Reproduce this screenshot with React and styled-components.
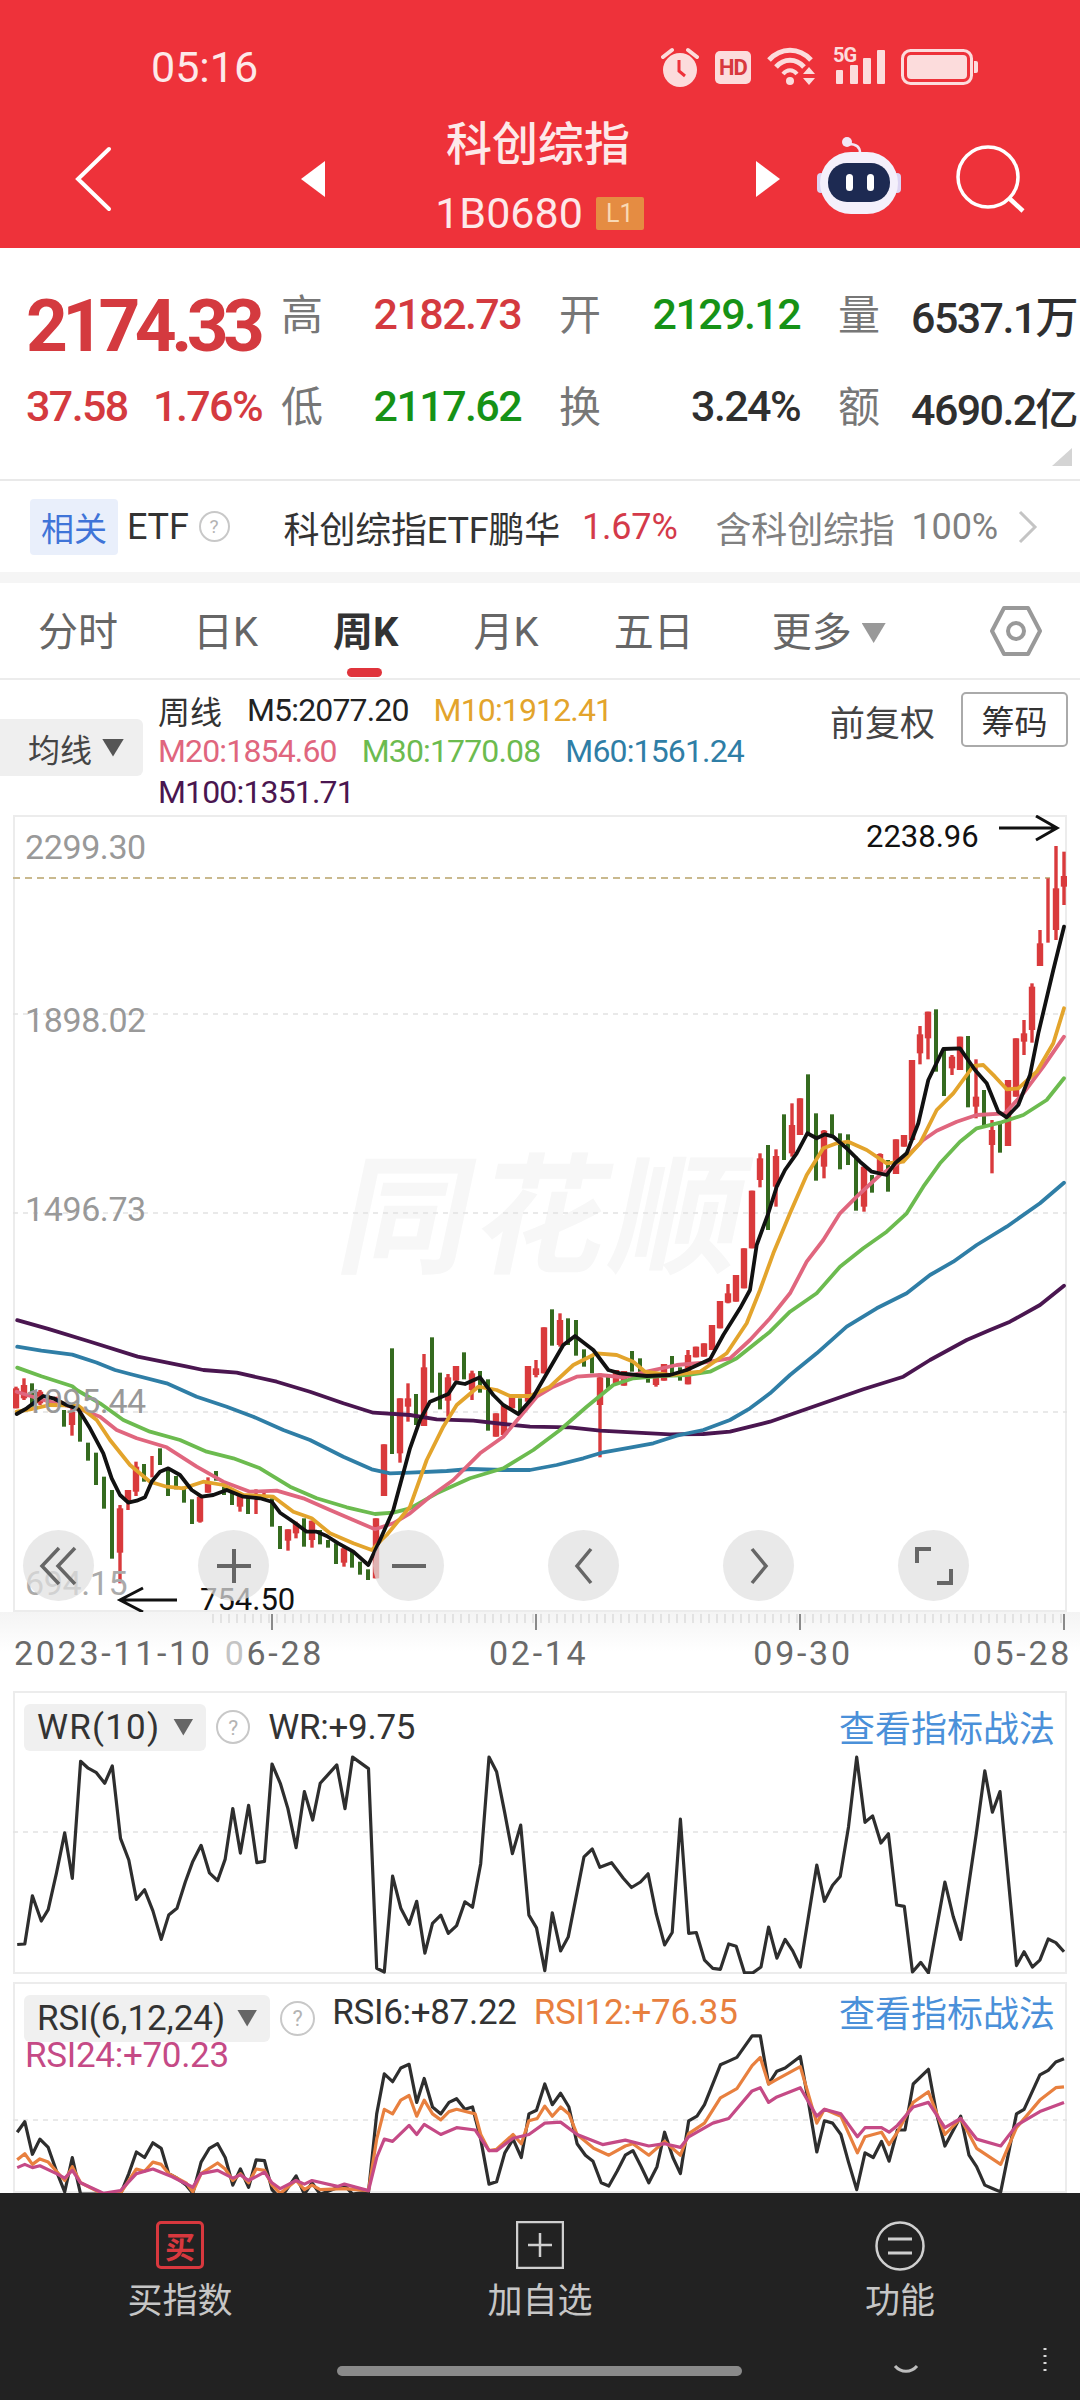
import React from 'react'
import styled, { createGlobalStyle } from 'styled-components'

const GlobalStyle = createGlobalStyle`
  html, body { margin: 0; padding: 0; background: #fff; }
  #root { width: 1080px; }
  * { box-sizing: border-box; }
`

// chart points were read off enlarged crops, each crop has its own scale
const crops = {
  z3: { x: 0, y: 1060, sx: 1.452, sy: 2.529 },
  z4: { x: 0, y: 1680, sx: 1.452, sy: 2.178 },
  z7: { x: 10, y: 1370, sx: 3, sy: 3 },
  z8: { x: 370, y: 1290, sx: 3, sy: 3 },
  z9: { x: 690, y: 1000, sx: 3, sy: 3 },
  z10: { x: 880, y: 830, sx: 3, sy: 3 },
}

const seg = (crop, str) => {
  const c = crops[crop]
  return str.trim().split(/\s+/).map((pair) => {
    const [a, b] = pair.split(',').map(Number)
    return `${(c.x + a / c.sx).toFixed(1)},${(c.y + b / c.sy).toFixed(1)}`
  }).join(' ')
}

const maLines = [
  { color: '#4a1650', points: [
    seg('z3', '25,658 70,680 130,712 200,750 270,775'),
    seg('z7', '580,0 680,8 800,35 900,65 1000,100 1090,128 1200,135'),
    seg('z8', '200,388 310,392 400,402 480,410 600,412 690,422 800,428 900,433 1000,432 1080,425 1200,395'),
    seg('z9', '520,1168 640,1130 720,1080 830,1020 900,990 960,965 1050,915 1122,857'),
  ] },
  { color: '#2f7ea6', points: [
    seg('z3', '25,725 60,735 105,745 140,765'),
    seg('z7', '315,0 360,12 470,40 560,80 650,110 730,140 820,180 900,210 1000,260 1085,298 1140,310 1200,308'),
    seg('z8', '230,543 300,537 400,540 480,540 560,525 640,505 700,487 780,473 850,460 920,437 1000,420 1080,390 1140,355 1200,310'),
    seg('z9', '300,1125 380,1060 470,980 560,925 650,880 720,825 790,785 860,735 950,680 1050,610 1122,548'),
  ] },
  { color: '#6cbb4f', points: [
    seg('z3', '25,778 60,800 105,825'),
    seg('z7', '200,60 270,100 340,150 420,185 510,210 590,245 670,265 750,295 840,350 920,385 1010,412 1095,432 1150,428 1200,415'),
    seg('z8', '200,610 300,565 400,535 490,480 570,420 650,350 730,285 790,265 870,258 950,255 1020,245 1100,205 1200,125'),
    seg('z9', '300,935 380,880 450,800 520,745 590,695 650,640 700,560 750,490 810,425 860,385 930,368 1000,345 1070,300 1122,235'),
  ] },
  { color: '#e0667e', points: [
    seg('z7', '20,65 100,90 205,115 270,140 320,180 380,205 470,232 560,290 640,335 720,365 800,362 880,385 960,420 1030,450 1095,478 1150,460 1200,430'),
    seg('z8', '180,620 250,570 330,490 400,440 450,380 500,320 550,290 620,260 690,255 760,262 830,245 920,225 1000,218 1080,205 1140,150 1200,85'),
    seg('z9', '300,880 350,785 400,720 450,640 500,590 570,525 640,480 700,420 740,392 800,365 860,345 945,340 1000,280 1060,200 1122,110'),
  ] },
  { color: '#e3a42c', points: [
    seg('z7', '20,125 60,118 120,105 205,107 260,150 300,210 360,285 420,335 470,350 520,355 580,335 640,345 700,375 790,380 850,425 905,445 960,490 1030,520 1085,540 1130,495 1200,410'),
    seg('z8', '170,510 220,410 260,345 325,290 380,300 420,318 480,318 540,290 610,225 680,190 740,195 790,215 825,245 900,255 990,245 1070,190 1130,100 1170,0'),
    seg('z9', '250,760 300,640 350,525 400,445 440,430 475,425 530,450 590,490 640,485 690,430 740,330 790,280 850,198 880,195 915,230 950,268 985,265 1040,215 1090,130 1122,25'),
  ] },
  { color: '#111', points: [
    seg('z7', '20,132 50,115 70,100 100,78 130,85 170,105 205,118 240,175 280,250 305,325 330,375 355,398 380,392 405,382 425,335 450,305 475,295 510,315 545,360 575,380 610,375 650,360 700,380 750,385 785,395 810,428 850,455 890,485 920,485 950,498 985,520 1030,545 1075,585 1110,510 1150,420 1185,290 1200,235'),
    seg('z8', '150,390 180,335 235,312 258,277 285,282 330,262 370,315 400,345 445,372 490,320 545,225 580,165 615,138 670,180 715,240 750,250 830,258 900,255 950,240 1020,208 1060,135 1110,55 1140,0'),
    seg('z9', '200,735 235,640 260,560 285,510 320,460 352,400 380,415 405,403 430,410 470,445 510,485 545,515 590,525 615,490 650,460 685,370 715,240 760,147 810,145 855,210 890,250 925,335 950,352 985,315 1020,225 1045,100'),
    seg('z10', '520,420 552,290'),
  ] },
]

// color, wick top, wick bottom, body top, body bottom (no body = solid bar)
const candles = [
  ...[
    ['r',18,50,115,55,115],['r',42,25,90,45,85],['g',66,40,110],['r',90,60,105,65,100],['r',114,75,110],['r',138,80,110],
    ['g',162,120,170],['r',186,110,197,125,165],['g',210,115,215],['g',234,218,272],['g',258,248,345],['g',282,320,416],
    ['g',306,360,566],['r',330,405,640,415,548],['r',354,360,420,360,395],['r',378,275,378,290,365],['g',402,282,335],
    ['r',426,258,322],['g',450,235,285],['g',474,295,378],['g',498,318,358],['g',522,350,398],['g',546,388,462],
    ['r',570,375,458,380,455],['r',594,322,368,335,368],['g',618,303,332],['g',642,350,375],['g',666,360,405],
    ['r',690,370,425,375,410],['g',714,380,432],['r',738,358,432],['r',762,362,385],['g',786,385,470],['g',810,468,537],
    ['r',834,478,542,478,512],['r',858,455,505,460,490],['g',882,445,530],['r',906,452,533,452,510],['g',930,480,523],
    ['g',954,510,533],['g',978,520,582],['r',1002,530,590,535,578],['g',1026,545,593],['g',1050,575,614],['g',1074,598,630],
    ['r',1098,445,625,445,625],['r',1122,223,378,223,378],
  ].map((c) => ['z7', ...c]),
  ...[
    ['g',66,175,492],['r',90,325,518,325,490],['r',114,280,395,325,350],['g',138,312,405],['r',162,192,408,232,408],
    ['g',186,142,308],['g',210,248,358],['r',234,252,380,262,332],['r',258,228,272,228,272],['g',282,187,268],
    ['r',306,242,330,250,300],['g',330,243,308],['g',354,268,422],['r',378,370,440,370,440],['r',402,345,435,345,435],
    ['r',426,318,355,318,355],['g',450,325,365],['r',474,228,335,228,335],['r',498,210,262,235,255],['r',522,112,250,112,250],
    ['g',546,58,167],['r',570,70,170,90,165],['g',594,85,165],['g',618,90,197],['g',642,178,230],['g',666,195,250],
    ['r',690,250,502,262,345],['g',714,255,295],['r',738,240,280,240,280],['r',762,243,287,243,287],['g',786,183,245],
    ['g',810,205,248],['g',834,240,278],['r',858,255,290,262,285],['r',882,222,272,222,272],['g',906,198,250],
    ['g',930,232,272],['r',954,180,283,195,283],
  ].map((c) => ['z8', ...c]),
  ...[
    ['r',18,1040,1072,1040,1072],['r',42,1030,1070,1030,1070],['r',66,975,1050,975,1050],['r',90,903,985,903,985],
    ['r',114,852,910,880,908],['r',138,825,905,825,905],['r',162,745,865,745,865],['r',186,572,745,572,745],
    ['r',210,460,562,475,540],['g',234,435,690],['r',258,448,620,468,560],['g',282,343,480],['r',306,310,470,375,460],
    ['r',330,295,405,295,405],['g',354,223,400],['g',378,340,542],['r',402,390,535,392,500],['g',426,343,410],['g',450,400,508],
    ['g',474,403,495],['g',498,470,632],['r',522,500,635,500,620],['g',546,525,578],['r',570,460,520,462,515],['g',594,480,575],
    ['r',618,418,522,418,522],['r',642,405,440,405,440],['r',666,180,420,180,420],['r',690,78,193,103,160],['r',714,35,178,35,115],
    ['g',738,28,215],['g',762,145,288],['r',786,165,225,170,205],['r',810,110,210,110,210],['g',834,108,322],
    ['r',858,178,355,290,320],['g',882,270,378],['r',906,360,520,390,435],['g',930,365,458],['r',954,240,438,240,438],
    ['r',978,115,290,115,290],
  ].map((c) => ['z9', ...c]),
  ...[
    ['r',432,570,675,610,635],['r',456,460,638,470,600],['r',480,300,408,340,408],['r',504,145,338],['r',528,48,330,175,300],
    ['r',552,65,225,138,170],
  ].map((c) => ['z10', ...c]),
]

const wrLine = seg('z4', '25,576 36,575 47,470 60,525 70,500 82,420 94,333 105,432 117,177 128,192 140,202 152,225 163,187 175,345 187,392 198,478 210,457 222,503 234,565 245,512 257,497 269,440 280,395 292,360 304,420 316,437 327,390 338,280 349,377 361,273 373,398 384,395 395,183 407,225 418,280 430,365 442,243 454,305 465,225 477,205 489,185 501,280 512,168 523,180 535,193 547,628 558,636 570,427 582,497 594,532 605,482 617,595 628,530 640,512 651,552 663,535 675,483 686,495 698,400 710,168 721,200 733,290 744,378 756,316 768,512 779,540 791,633 802,507 814,590 825,560 848,385 860,368 871,408 888,398 905,432 917,452 930,440 941,422 953,510 965,577 976,550 988,303 1000,552 1011,550 1023,610 1035,628 1046,630 1058,575 1069,580 1081,638 1093,638 1105,625 1116,538 1128,606 1140,565 1151,590 1162,625 1186,403 1197,482 1209,447 1220,428 1232,320 1244,168 1256,310 1267,296 1279,355 1290,335 1302,490 1313,493 1325,636 1337,615 1348,638 1372,440 1384,515 1395,565 1418,330 1430,198 1441,288 1452,243 1476,622 1487,592 1499,625 1510,610 1522,564 1533,572 1545,592')

const rsiLines = [
  { color: '#2e2e2e', points: seg('z4', '25,985 36,962 47,1033 58,1000 70,1018 82,1070 94,1115 105,1040 117,1120 175,1120 187,1075 198,1028 210,1040 222,1008 234,1020 245,1075 257,1085 270,1100 280,1118 292,1050 304,1020 316,1010 327,1040 338,1100 349,1065 361,1105 372,1045 384,1047 395,1110 407,1130 430,1080 442,1120 453,1095 465,1120 500,1100 512,1120 535,1115 547,945 558,858 570,875 582,845 594,837 605,920 616,868 628,930 640,945 652,920 663,912 675,935 686,930 698,1000 710,1098 721,1093 733,1030 745,1000 757,1040 768,945 779,937 791,880 802,925 814,900 826,930 838,1010 850,1035 861,1048 873,1095 884,1102 896,1070 908,1035 919,1025 931,1060 942,1095 954,1060 965,985 977,1040 988,1075 1000,960 1012,950 1023,925 1046,838 1058,830 1070,822 1092,775 1104,775 1116,880 1128,852 1140,845 1162,820 1174,920 1186,1028 1197,960 1209,965 1221,990 1232,1050 1244,1110 1256,1030 1268,1040 1280,1005 1291,1048 1303,980 1314,980 1326,880 1348,848 1360,945 1372,1015 1395,950 1407,1035 1418,1060 1430,1100 1442,1108 1453,1115 1476,945 1487,935 1510,860 1522,850 1533,832 1545,825') },
  { color: '#e8803f', points: seg('z4', '25,1045 36,1032 47,1055 58,1043 70,1050 82,1070 94,1090 105,1060 117,1095 150,1120 175,1118 198,1065 210,1070 222,1050 234,1055 245,1075 270,1095 280,1115 292,1075 316,1052 327,1065 338,1090 349,1075 361,1095 372,1065 384,1068 395,1100 407,1118 430,1090 442,1110 453,1100 465,1110 500,1108 535,1112 547,1000 558,935 570,945 582,915 594,905 605,950 616,915 628,945 640,958 652,940 663,935 690,945 698,990 710,1025 721,1022 745,990 757,1010 768,960 780,955 791,928 802,950 814,930 826,945 838,990 862,1020 884,1035 908,1015 919,1010 942,1035 965,1005 988,1035 1000,988 1023,965 1046,910 1070,890 1092,840 1104,822 1116,880 1128,870 1162,842 1186,965 1197,935 1221,950 1245,1030 1256,995 1280,985 1291,1012 1303,985 1326,920 1348,897 1372,990 1395,955 1418,1020 1453,1055 1476,975 1510,915 1533,888 1545,886') },
  { color: '#c54a86', points: seg('z4', '25,1062 36,1055 47,1062 58,1058 82,1075 94,1085 105,1068 117,1095 150,1118 175,1112 198,1075 222,1065 250,1082 280,1105 292,1075 316,1068 338,1085 349,1078 361,1090 384,1072 395,1095 407,1108 430,1090 442,1098 453,1090 490,1103 500,1098 535,1112 547,1040 558,1000 570,1005 594,970 605,990 616,968 640,990 663,975 690,980 710,1025 721,1025 745,998 768,990 791,965 814,963 838,990 875,1012 908,1002 942,1015 965,1010 988,1018 1000,995 1035,965 1058,955 1092,895 1104,888 1116,920 1128,908 1162,888 1186,950 1197,935 1221,945 1245,995 1256,975 1280,975 1291,985 1303,970 1326,930 1348,920 1372,975 1395,955 1418,1000 1453,1015 1476,970 1510,940 1545,920') },
]

const candleRects = candles.map(([crop, kind, zx, top, bot, bTop, bBot], i) => {
  const c = crops[crop]
  const x = c.x + zx / c.sx
  const y = (v) => c.y + v / c.sy
  const fill = kind === 'r' ? '#d93a3c' : '#356b1f'
  const wick = kind === 'r' ? 3.4 : 4
  return (
    <g key={i} fill={fill}>
      <rect x={x - wick / 2} y={y(top)} width={wick} height={(bot - top) / c.sy} />
      {bTop !== undefined && <rect x={x - 3.2} y={y(bTop)} width={6.4} height={(bBot - bTop) / c.sy} />}
    </g>
  )
})

const minorTicks = []
for (let x = 213; x < 1068; x += 8) minorTicks.push(x)

const PALE = '#fcdcdc'

const App = () => {
  return (
    <Page>
      <GlobalStyle />
      <Header>
        <StatusBar>
          <Clock>05:16</Clock>
          <StatusIcons>
            <svg width="38" height="40" viewBox="0 0 38 40">
              <circle cx="19" cy="23" r="17" fill={PALE} />
              <path d="M18 13v11l6 5" stroke="#ee323a" strokeWidth="3" fill="none" />
              <path d="M2 10 L11 3 M36 10 L27 3" stroke={PALE} strokeWidth="4" strokeLinecap="round" />
            </svg>
            <HdBadge>HD</HdBadge>
            <svg width="50" height="40" viewBox="0 0 50 40">
              <path d="M2 13 C14 0 32 0 44 13" stroke={PALE} strokeWidth="5" fill="none" />
              <path d="M9 20 C17 11 29 11 37 20" stroke={PALE} strokeWidth="5" fill="none" />
              <path d="M16 27 C20 22 26 22 30 27" stroke={PALE} strokeWidth="4" fill="none" />
              <circle cx="23" cy="34" r="4" fill={PALE} />
              <path d="M36 27 L48 27 L42 20 Z M36 31 L48 31 L42 38 Z" fill={PALE} />
            </svg>
            <Signal>
              <SignalText>5G</SignalText>
              <svg width="52" height="36" viewBox="0 0 52 36">
                <rect x="3" y="20" width="7" height="14" rx="1" fill={PALE} />
                <rect x="17" y="15" width="8" height="19" rx="1" fill={PALE} />
                <rect x="30" y="8" width="8" height="26" rx="1" fill={PALE} />
                <rect x="44" y="0" width="8" height="34" rx="1" fill={PALE} />
              </svg>
            </Signal>
            <svg width="77" height="36" viewBox="0 0 77 36">
              <rect x="1.5" y="1.5" width="69" height="33" rx="8" fill="none" stroke={PALE} strokeWidth="3" />
              <rect x="6" y="6" width="60" height="24" rx="4" fill={PALE} />
              <path d="M73 12 h2 a2 2 0 0 1 2 2 v8 a2 2 0 0 1 -2 2 h-2 Z" fill={PALE} />
            </svg>
          </StatusIcons>
        </StatusBar>
        <NavRow>
          <svg width="38" height="66" viewBox="0 0 38 66">
            <path d="M35 3 L4 33 L35 63" stroke="#fff" strokeWidth="4" fill="none" strokeLinecap="round" />
          </svg>
          <NavArrow $left />
          <TitleBlock>
            <Title>科创综指</Title>
            <CodeRow>
              <Code>1B0680</Code>
              <LevelBadge>L1</LevelBadge>
            </CodeRow>
          </TitleBlock>
          <NavArrow />
          <RobotIcon width="84" height="78" viewBox="0 0 84 78">
            <circle cx="30" cy="5" r="5" fill="#f2e6f5" />
            <path d="M32 7 C40 7 43 10 43 16" stroke="#f2e6f5" strokeWidth="2.5" fill="none" />
            <rect x="0" y="36" width="8" height="20" rx="4" fill="#dcd4f2" />
            <rect x="76" y="36" width="8" height="20" rx="4" fill="#dcd4f2" />
            <rect x="3" y="15" width="78" height="62" rx="31" fill="#f4f0fb" />
            <rect x="11" y="26" width="62" height="39" rx="19" fill="#1d2a52" />
            <rect x="29" y="37" width="7" height="17" rx="3.5" fill="#fff" />
            <rect x="50" y="37" width="7" height="17" rx="3.5" fill="#fff" />
          </RobotIcon>
          <SearchIcon width="70" height="68" viewBox="0 0 70 68">
            <circle cx="32" cy="32" r="30" stroke="#fff" strokeWidth="3.5" fill="none" />
            <path d="M54 54 L67 66" stroke="#fff" strokeWidth="4.5" />
          </SearchIcon>
        </NavRow>
      </Header>

      <Quote>
        <QuoteMain>
          <BigPrice>2174.33</BigPrice>
        </QuoteMain>
        <QuotePair><Label>高</Label><Value $color="#d43a3f">2182.73</Value></QuotePair>
        <QuotePair><Label>开</Label><Value $color="#169216">2129.12</Value></QuotePair>
        <QuotePair><Label>量</Label><Value $color="#2f2f2f">6537.1万</Value></QuotePair>
        <QuoteMain>
          <Value $color="#d43a3f">37.58</Value>
          <Value $color="#d43a3f">1.76%</Value>
        </QuoteMain>
        <QuotePair><Label>低</Label><Value $color="#169216">2117.62</Value></QuotePair>
        <QuotePair><Label>换</Label><Value $color="#2f2f2f">3.24%</Value></QuotePair>
        <QuotePair><Label>额</Label><Value $color="#2f2f2f">4690.2亿</Value></QuotePair>
        <CornerMark />
      </Quote>

      <EtfRow>
        <EtfBadge>相关</EtfBadge>
        <EtfText $gap={9}>ETF</EtfText>
        <Help $size={31} $gap={10}>?</Help>
        <EtfText $gap={54}>科创综指ETF鹏华</EtfText>
        <EtfText $gap={22} $color="#d43a4a">1.67%</EtfText>
        <EtfText $gap={38} $color="#808080">含科创综指</EtfText>
        <EtfText $gap={17} $color="#808080">100%</EtfText>
        <EtfChevron width="20" height="34" viewBox="0 0 20 34">
          <path d="M2 2 L17 17 L2 32" stroke="#c4c4c4" strokeWidth="3" fill="none" />
        </EtfChevron>
      </EtfRow>
      <GapBar />

      <Tabs>
        <Tab>分时</Tab>
        <Tab>日K</Tab>
        <Tab $active>周K</Tab>
        <Tab>月K</Tab>
        <Tab>五日</Tab>
        <Tab $gap={78}>更多<Caret $w={24} $h={20} $color="#999" $gap={10} /></Tab>
        <SettingIcon width="54" height="52" viewBox="0 0 54 52">
          <path d="M15 3 H39 L51 26 L39 49 H15 L3 26 Z" stroke="#999" strokeWidth="4" fill="none" strokeLinejoin="round" />
          <circle cx="27" cy="26" r="8" stroke="#999" strokeWidth="4" fill="none" />
        </SettingIcon>
      </Tabs>

      <MaBar>
        <AvgButton>均线<Caret $w={22} $h={18} $color="#555" $gap={10} /></AvgButton>
        <MaList>
          <MaRow>
            <MaName>周线</MaName>
            <MaValue $color="#222">M5:2077.20</MaValue>
            <MaValue $color="#e3a42c">M10:1912.41</MaValue>
          </MaRow>
          <MaRow>
            <MaValue $color="#e0667e">M20:1854.60</MaValue>
            <MaValue $color="#6cbb4f">M30:1770.08</MaValue>
            <MaValue $color="#2f7ea6">M60:1561.24</MaValue>
          </MaRow>
          <MaRow>
            <MaValue $color="#4a1650">M100:1351.71</MaValue>
          </MaRow>
        </MaList>
        <MaTools>
          <AdjustText>前复权</AdjustText>
          <ChipButton>筹码</ChipButton>
        </MaTools>
      </MaBar>

      <Chart>
        <Watermark>同花顺</Watermark>
        <FillSvg viewBox="13 815 1054 797" preserveAspectRatio="none">
          <line x1="13" x2="1050" y1="878" y2="878" stroke="#c9b98e" strokeWidth="2" strokeDasharray="7 5" />
          {[1014, 1213, 1412].map((y) => (
            <line key={y} x1="13" x2="1067" y1={y} y2={y} stroke="#e2e2e2" strokeWidth="1.5" strokeDasharray="5 5" />
          ))}
          {candleRects}
          {maLines.map((line) => (
            <polyline
              key={line.color}
              points={line.points.join(' ')}
              stroke={line.color}
              strokeWidth="3.8"
              strokeLinejoin="round"
              strokeLinecap="round"
              fill="none"
            />
          ))}
          <path d="M999 828 H1055 M1036 816 L1057 828 L1036 840" stroke="#111" strokeWidth="3" fill="none" />
          <path d="M177 1600 H122 M143 1588 L120 1600 L143 1612" stroke="#111" strokeWidth="3" fill="none" />
        </FillSvg>
        <PriceTag $top={830 - 815}>2299.30</PriceTag>
        <PriceTag $top={1003 - 815}>1898.02</PriceTag>
        <PriceTag $top={1192 - 815}>1496.73</PriceTag>
        <PriceTag $top={1384 - 815}>1095.44</PriceTag>
        <PriceTag $top={1566 - 815} $faded>694.15</PriceTag>
        <PointTag $left={866 - 13} $top={820 - 815}>2238.96</PointTag>
        <PointTag $left={200 - 13} $top={1583 - 815}>754.50</PointTag>
        <ControlRow>
          <ControlButton>
            <svg width="40" height="44" viewBox="0 0 40 44">
              <path d="M20 4 L3 22 L20 40 M36 4 L19 22 L36 40" stroke="#666" strokeWidth="3.5" fill="none" />
            </svg>
          </ControlButton>
          <ControlButton>
            <svg width="36" height="36" viewBox="0 0 36 36">
              <path d="M18 1 V35 M1 18 H35" stroke="#666" strokeWidth="4" fill="none" />
            </svg>
          </ControlButton>
          <ControlButton>
            <svg width="36" height="36" viewBox="0 0 36 36">
              <path d="M1 18 H35" stroke="#666" strokeWidth="4" fill="none" />
            </svg>
          </ControlButton>
          <ControlButton>
            <svg width="20" height="38" viewBox="0 0 20 38">
              <path d="M17 2 L3 19 L17 36" stroke="#666" strokeWidth="3.5" fill="none" />
            </svg>
          </ControlButton>
          <ControlButton>
            <svg width="20" height="38" viewBox="0 0 20 38">
              <path d="M3 2 L17 19 L3 36" stroke="#666" strokeWidth="3.5" fill="none" />
            </svg>
          </ControlButton>
          <ControlButton>
            <svg width="38" height="38" viewBox="0 0 38 38">
              <path d="M16 2 H2 V16 M22 36 H36 V22" stroke="#666" strokeWidth="4" fill="none" />
            </svg>
          </ControlButton>
        </ControlRow>
      </Chart>

      <Axis>
        <svg width="1080" height="20" viewBox="0 0 1080 20">
          {minorTicks.map((x) => (
            <line key={x} x1={x} x2={x} y1="2" y2="11" stroke="#cfcfcf" strokeWidth="1" />
          ))}
          {[272, 536, 800, 1064].map((x) => (
            <line key={x} x1={x} x2={x} y1="2" y2="18" stroke="#8a8a8a" strokeWidth="2" />
          ))}
        </svg>
        <DateRow>
          <DateText>2023-11-10</DateText>
          <DateText $gap={12}><FadedDigit>0</FadedDigit>6-28</DateText>
          <DateText $gap={165}>02-14</DateText>
          <DateText $gap={165}>09-30</DateText>
          <DateText $gap={120}>05-28</DateText>
        </DateRow>
      </Axis>

      <WrPanel>
        <PanelSvg viewBox="13 1691 1054 283" preserveAspectRatio="none">
          <line x1="13" x2="1067" y1="1832" y2="1832" stroke="#e2e2e2" strokeWidth="1.5" strokeDasharray="5 5" />
          <polyline points={wrLine} stroke="#2e2e2e" strokeWidth="3.2" fill="none" strokeLinejoin="round" />
        </PanelSvg>
        <PanelHead>
          <IndexButton $wide>WR(10)<Caret $w={20} $h={17} $color="#666" $gap={13} /></IndexButton>
          <Help $size={34} $gap={10}>?</Help>
          <PanelValue $gap={18} $color="#333">WR:+9.75</PanelValue>
          <PanelLink>查看指标战法</PanelLink>
        </PanelHead>
      </WrPanel>

      <RsiPanel>
        <PanelSvg viewBox="13 1982 1054 211" preserveAspectRatio="none">
          <line x1="13" x2="1067" y1="2120" y2="2120" stroke="#e2e2e2" strokeWidth="1.5" strokeDasharray="5 5" />
          {rsiLines.map((line) => (
            <polyline key={line.color} points={line.points} stroke={line.color} strokeWidth="3.2" fill="none" strokeLinejoin="round" />
          ))}
        </PanelSvg>
        <PanelHead>
          <IndexButton>RSI(6,12,24)<Caret $w={20} $h={17} $color="#666" $gap={12} /></IndexButton>
          <Help $size={35} $gap={10}>?</Help>
          <PanelValue $gap={17} $color="#333" $raised>RSI6:+87.22</PanelValue>
          <PanelValue $gap={17} $color="#e8803f" $raised>RSI12:+76.35</PanelValue>
          <PanelLink $raised>查看指标战法</PanelLink>
        </PanelHead>
        <RsiExtra>RSI24:+70.23</RsiExtra>
      </RsiPanel>

      <BottomBar>
        <BottomItem>
          <BuyBox>买</BuyBox>
          <BottomLabel>买指数</BottomLabel>
        </BottomItem>
        <BottomItem>
          <svg width="48" height="48" viewBox="0 0 48 48">
            <rect x="1" y="1" width="46" height="46" stroke="#cfcfcf" strokeWidth="2.5" fill="none" />
            <path d="M24 12 V36 M12 24 H36" stroke="#cfcfcf" strokeWidth="2.5" />
          </svg>
          <BottomLabel>加自选</BottomLabel>
        </BottomItem>
        <BottomItem>
          <svg width="50" height="50" viewBox="0 0 50 50">
            <circle cx="25" cy="25" r="23.5" stroke="#cfcfcf" strokeWidth="2.5" fill="none" />
            <path d="M13 18 H37 M13 32 H37" stroke="#cfcfcf" strokeWidth="3" />
          </svg>
          <BottomLabel>功能</BottomLabel>
        </BottomItem>
        <HomeBar />
        <BarResidue width="90" height="32" viewBox="0 0 160 32">
          <path d="M2 22 C8 29 18 29 24 22" stroke="#bdbdbd" strokeWidth="3" fill="none" />
          <path d="M152 4 v2 M152 11 v2 M152 18 v2 M152 25 v2" stroke="#d8d8d8" strokeWidth="3" />
        </BarResidue>
      </BottomBar>
    </Page>
  )
}

export default App

const Page = styled.div`
  width: 1080px;
  height: 2400px;
  overflow: hidden;
  display: flex;
  flex-direction: column;
  background: #fff;
  font-family: Roboto, "Noto Sans CJK SC", sans-serif;
  color: #333;
`

const Header = styled.header`
  height: 248px;
  background: #ee323a;
  flex-shrink: 0;
`

const StatusBar = styled.div`
  height: 110px;
  padding: 47px 102px 0 151px;
  display: flex;
  align-items: flex-start;
  justify-content: space-between;
`

const Clock = styled.span`
  font-size: 43px;
  line-height: 40px;
  color: #fde9e9;
`

const StatusIcons = styled.div`
  display: flex;
  align-items: center;
  gap: 16px;
  height: 40px;
`

const HdBadge = styled.span`
  width: 36px;
  height: 33px;
  border-radius: 5px;
  background: ${PALE};
  color: #d8383e;
  font-size: 22px;
  font-weight: 700;
  letter-spacing: -1px;
  display: flex;
  align-items: center;
  justify-content: center;
`

const Signal = styled.div`
  position: relative;
  width: 52px;
  height: 38px;
  display: flex;
  align-items: flex-end;
`

const SignalText = styled.span`
  position: absolute;
  left: 0;
  top: -3px;
  font-size: 20px;
  font-weight: 700;
  letter-spacing: -1px;
  line-height: 20px;
  color: ${PALE};
`

const NavRow = styled.nav`
  height: 138px;
  padding-left: 74px;
  display: flex;
  align-items: center;
`

const NavArrow = styled.span`
  width: 24px;
  height: 36px;
  background: #fff;
  margin-left: ${(p) => (p.$left ? '189px' : '0')};
  clip-path: ${(p) => (p.$left ? 'polygon(100% 0, 100% 100%, 0 50%)' : 'polygon(0 0, 100% 50%, 0 100%)')};
`

const TitleBlock = styled.div`
  width: 431px;
  padding-right: 5px;
  align-self: flex-end;
  display: flex;
  flex-direction: column;
  align-items: center;
  color: #fde9e9;
`

const Title = styled.div`
  font-size: 46px;
  font-weight: 500;
  line-height: 60px;
  margin-top: -4px;
  margin-bottom: 4px;
`

const CodeRow = styled.div`
  height: 70px;
  display: flex;
  align-items: center;
  padding-left: 3px;
`

const Code = styled.span`
  font-size: 43px;
`

const LevelBadge = styled.span`
  width: 48px;
  height: 33px;
  margin-left: 13px;
  background: #e58c42;
  border-radius: 2px;
  color: #f9d9b4;
  font-size: 25px;
  display: flex;
  align-items: center;
  justify-content: center;
`

const RobotIcon = styled.svg`
  margin-left: 37px;
  margin-bottom: 6px;
`

const SearchIcon = styled.svg`
  margin-left: 55px;
`

const Quote = styled.section`
  position: relative;
  height: 233px;
  flex-shrink: 0;
  padding: 20px 0 0 26px;
  border-bottom: 2px solid #e9e9e9;
  display: grid;
  grid-template-columns: 217px 240px 241px 239px;
  grid-template-rows: 92px 92px;
  column-gap: 38px;
  align-items: center;
`

const QuoteMain = styled.div`
  width: 236px;
  display: flex;
  justify-content: space-between;
`

const BigPrice = styled.span`
  font-size: 73px;
  line-height: 73px;
  font-weight: 700;
  letter-spacing: -5.6px;
  color: #d43a3f;
  padding-top: 24px;
`

const QuotePair = styled.div`
  display: flex;
  align-items: center;
  justify-content: space-between;
`

const Label = styled.span`
  font-size: 42px;
  color: #777;
  margin-bottom: 6px;
`

const Value = styled.span`
  font-size: 43px;
  letter-spacing: -1.6px;
  font-weight: 500;
  color: ${(p) => p.$color};
`

const CornerMark = styled.span`
  position: absolute;
  right: 8px;
  bottom: 13px;
  width: 20px;
  height: 18px;
  background: #d4d4d4;
  clip-path: polygon(100% 0, 100% 100%, 0 100%);
`

const EtfRow = styled.div`
  height: 91px;
  flex-shrink: 0;
  padding-left: 30px;
  display: flex;
  align-items: center;
`

const EtfBadge = styled.span`
  width: 88px;
  height: 56px;
  border-radius: 4px;
  background: #e9effb;
  color: #3f74d8;
  font-size: 33px;
  display: flex;
  align-items: center;
  justify-content: center;
`

const EtfText = styled.span`
  font-size: 36px;
  letter-spacing: -0.2px;
  margin-left: ${(p) => p.$gap}px;
  color: ${(p) => p.$color || '#333'};
  white-space: nowrap;
`

const Help = styled.span`
  width: ${(p) => p.$size}px;
  height: ${(p) => p.$size}px;
  margin-left: ${(p) => p.$gap}px;
  border-radius: 50%;
  border: 2px solid #c8c8c8;
  color: #b4b4b4;
  font-size: ${(p) => p.$size * 0.62}px;
  display: inline-flex;
  align-items: center;
  justify-content: center;
  flex-shrink: 0;
`

const EtfChevron = styled.svg`
  margin-left: 20px;
`

const GapBar = styled.div`
  height: 11px;
  flex-shrink: 0;
  background: #f5f5f5;
`

const Tabs = styled.div`
  height: 97px;
  flex-shrink: 0;
  padding: 5px 37px 0 38px;
  border-bottom: 2px solid #ececec;
  display: flex;
  align-items: center;
  gap: 75px;
`

const Tab = styled.span`
  position: relative;
  display: flex;
  align-items: center;
  margin-left: ${(p) => (p.$gap ? p.$gap - 75 : 0)}px;
  font-size: 40px;
  line-height: 60px;
  font-weight: ${(p) => (p.$active ? 700 : 400)};
  color: ${(p) => (p.$active ? '#333' : '#666')};

  &::after {
    content: '';
    display: ${(p) => (p.$active ? 'block' : 'none')};
    position: absolute;
    left: 14px;
    right: 17px;
    bottom: -14px;
    height: 9px;
    border-radius: 5px;
    background: #e0343c;
  }
`

const Caret = styled.span`
  display: inline-block;
  width: ${(p) => p.$w}px;
  height: ${(p) => p.$h}px;
  margin-left: ${(p) => p.$gap}px;
  background: ${(p) => p.$color};
  clip-path: polygon(0 0, 100% 0, 50% 100%);
`

const SettingIcon = styled.svg`
  margin-left: auto;
  margin-top: -4px;
`

const MaBar = styled.div`
  height: 135px;
  flex-shrink: 0;
  display: flex;
  align-items: flex-start;
`

const AvgButton = styled.div`
  width: 143px;
  height: 57px;
  margin-top: 39px;
  padding-left: 28px;
  border-radius: 0 6px 6px 0;
  background: #efefef;
  font-size: 32px;
  color: #444;
  display: flex;
  align-items: center;
`

const MaList = styled.div`
  margin-left: 15px;
  padding-top: 9px;
`

const MaRow = styled.div`
  height: 41px;
  display: flex;
  align-items: center;
  gap: 25px;
`

const MaName = styled.span`
  font-size: 32px;
  color: #333;
`

const MaValue = styled.span`
  font-size: 32px;
  letter-spacing: -0.85px;
  color: ${(p) => p.$color};
`

const MaTools = styled.div`
  margin-left: auto;
  padding: 12px 12px 0 0;
  display: flex;
  align-items: flex-start;
  gap: 26px;
`

const AdjustText = styled.span`
  font-size: 35px;
  line-height: 50px;
  margin-top: 8px;
  color: #444;
`

const ChipButton = styled.span`
  width: 107px;
  height: 55px;
  border: 2px solid #aaa;
  border-radius: 5px;
  font-size: 33px;
  color: #333;
  display: flex;
  align-items: center;
  justify-content: center;
`

const Chart = styled.div`
  position: relative;
  width: 1054px;
  height: 797px;
  margin-left: 13px;
  flex-shrink: 0;
  box-shadow: inset 0 0 0 2px #ececec;
`

const FillSvg = styled.svg`
  position: absolute;
  left: 0;
  top: 0;
  width: 100%;
  height: 100%;
`

const Watermark = styled.span`
  position: absolute;
  left: 330px;
  top: 332px;
  font-size: 130px;
  line-height: 144px;
  font-weight: 700;
  letter-spacing: 6px;
  color: #f7f7f7;
  transform: skewX(-12deg);
`

const PriceTag = styled.span`
  position: absolute;
  left: 12px;
  top: ${(p) => p.$top}px;
  font-size: 34px;
  line-height: 34px;
  letter-spacing: -0.4px;
  color: ${(p) => (p.$faded ? '#aaa' : '#999')};
`

const PointTag = styled.span`
  position: absolute;
  left: ${(p) => p.$left}px;
  top: ${(p) => p.$top}px;
  font-size: 31px;
  line-height: 34px;
  color: #111;
`

const ControlRow = styled.div`
  position: absolute;
  left: 10px;
  bottom: 11px;
  display: flex;
  gap: 104px;
`

const ControlButton = styled.span`
  width: 71px;
  height: 71px;
  border-radius: 50%;
  background: rgba(225, 225, 225, 0.72);
  display: flex;
  align-items: center;
  justify-content: center;
`

const Axis = styled.div`
  height: 79px;
  flex-shrink: 0;
  background: linear-gradient(#f4f4f4, #fff 40px);

  svg {
    display: block;
  }
`

const DateRow = styled.div`
  height: 42px;
  padding-left: 14px;
  display: flex;
  align-items: center;
`

const DateText = styled.span`
  margin-left: ${(p) => p.$gap || 0}px;
  font-size: 34px;
  letter-spacing: 2.7px;
  color: #6a6a6a;
`

const FadedDigit = styled.span`
  color: #c4c4c4;
`

const WrPanel = styled.section`
  position: relative;
  width: 1054px;
  height: 283px;
  margin-left: 13px;
  flex-shrink: 0;
  box-shadow: inset 0 0 0 2px #ececec;
`

const RsiPanel = styled.section`
  position: relative;
  width: 1054px;
  margin: 8px 0 0 13px;
  flex: 1;
  overflow: hidden;
  box-shadow: inset 0 0 0 2px #ececec;
`

const PanelSvg = styled.svg`
  position: absolute;
  left: 0;
  top: 0;
  width: 100%;
  height: 100%;
`

const PanelHead = styled.div`
  position: relative;
  height: 48px;
  margin-top: 12px;
  padding: 0 12px 0 11px;
  display: flex;
  align-items: center;
`

const IndexButton = styled.div`
  height: 47px;
  padding: 0 13px;
  border-radius: 6px;
  background: #f0f0f0;
  font-size: 35px;
  letter-spacing: ${(p) => (p.$wide ? '1.2px' : '0')};
  color: #333;
  display: flex;
  align-items: center;
  white-space: nowrap;
`

const PanelValue = styled.span`
  margin: ${(p) => (p.$raised ? '0 0 12px' : '0')};
  margin-left: ${(p) => p.$gap}px;
  font-size: 35px;
  letter-spacing: -0.3px;
  color: ${(p) => p.$color};
  white-space: nowrap;
`

const PanelLink = styled.span`
  margin-left: auto;
  margin-bottom: ${(p) => (p.$raised ? '15px' : '3px')};
  font-size: 36px;
  color: #4a90d9;
`

const RsiExtra = styled.div`
  position: relative;
  margin: -4px 0 0 12px;
  font-size: 35px;
  line-height: 36px;
  letter-spacing: -0.3px;
  color: #c54a86;
`

const BottomBar = styled.footer`
  position: relative;
  height: 207px;
  flex-shrink: 0;
  padding-top: 28px;
  background: #222;
  display: grid;
  grid-template-columns: repeat(3, 360px);
  justify-items: center;
  align-items: start;
`

const BottomItem = styled.div`
  display: flex;
  flex-direction: column;
  align-items: center;
  gap: 6px;
  height: 104px;
  justify-content: space-between;
`

const BuyBox = styled.span`
  width: 48px;
  height: 48px;
  border: 3px solid #d8383e;
  border-radius: 5px;
  color: #d8383e;
  font-size: 30px;
  font-weight: 700;
  display: flex;
  align-items: center;
  justify-content: center;
`

const BottomLabel = styled.span`
  font-size: 35px;
  line-height: 46px;
  color: #c6c6c6;
`

const HomeBar = styled.span`
  position: absolute;
  left: 337px;
  bottom: 24px;
  width: 405px;
  height: 10px;
  border-radius: 5px;
  background: #8a8a8a;
`

const BarResidue = styled.svg`
  position: absolute;
  left: 893px;
  bottom: 24px;
  width: 160px;
`
